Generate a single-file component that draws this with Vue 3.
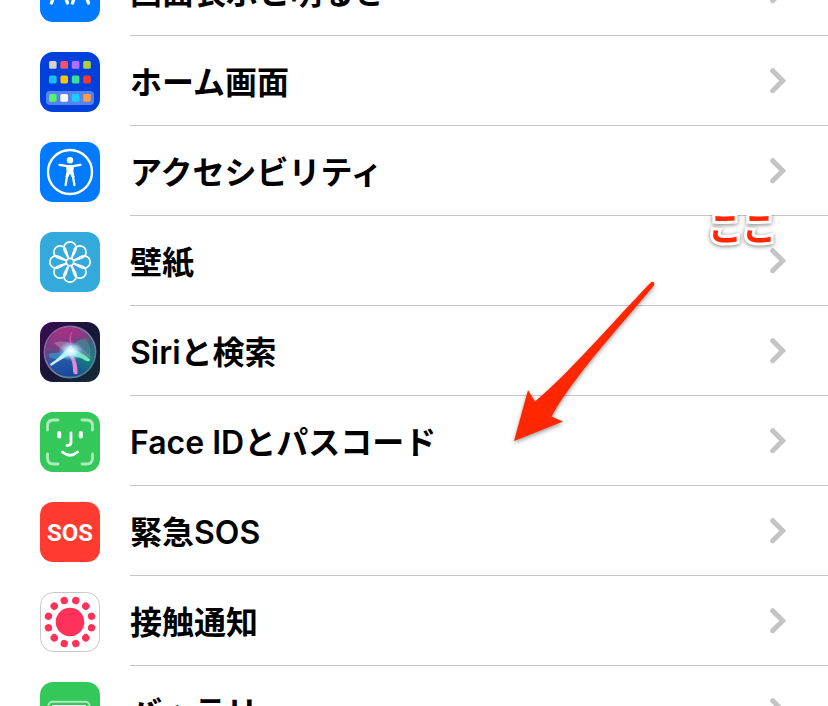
<template>
  <main class="screen">
    <ul class="settings-list">
      <li v-for="item in items" :key="item.id">
        <a class="row" :href="`#${item.id}`">
          <svg class="icon" viewBox="0 0 60 60" aria-hidden="true">
            <defs v-if="item.id === 'siri'">
              <linearGradient id="siri-bg" x1="0" y1="0" x2="1" y2="1">
                <stop offset="0" stop-color="#3c0b55" />
                <stop offset="0.5" stop-color="#171536" />
                <stop offset="1" stop-color="#152c38" />
              </linearGradient>
              <linearGradient id="siri-orb" x1="0.3" y1="0" x2="0.5" y2="1">
                <stop offset="0" stop-color="#b52a86" />
                <stop offset="0.4" stop-color="#704383" />
                <stop offset="0.65" stop-color="#2757a6" />
                <stop offset="1" stop-color="#1549a0" />
              </linearGradient>
              <radialGradient id="siri-teal" cx="0.95" cy="0.6" r="0.5">
                <stop offset="0" stop-color="#15866f" />
                <stop offset="1" stop-color="#15866f" stop-opacity="0" />
              </radialGradient>
              <radialGradient id="siri-glow">
                <stop offset="0" stop-color="#ffffff" />
                <stop offset="0.4" stop-color="#c8f5ff" stop-opacity="0.85" />
                <stop offset="1" stop-color="#67cfff" stop-opacity="0" />
              </radialGradient>
              <linearGradient id="siri-ring" x1="0" y1="0" x2="1" y2="1">
                <stop offset="0" stop-color="#9b4a9b" />
                <stop offset="0.5" stop-color="#7b81a6" />
                <stop offset="1" stop-color="#37869a" />
              </linearGradient>
            </defs>

            <rect
              class="tile"
              :class="{ outlined: item.id === 'exposure' }"
              :x="item.id === 'exposure' ? 0.5 : 0"
              :y="item.id === 'exposure' ? 0.5 : 0"
              :width="item.id === 'exposure' ? 59 : 60"
              :height="item.id === 'exposure' ? 59 : 60"
              rx="13"
              :fill="item.color"
            />

            <g v-if="item.id === 'display'" fill="none" stroke="#fff" stroke-width="3.4" stroke-linecap="round" stroke-linejoin="round">
              <path d="M11.5 41 L19.5 18 L27.5 41 M14 35 H25" />
              <path d="M32.5 41 L40.5 18 L48.5 41 M35 35 H46" />
            </g>

            <g v-else-if="item.id === 'home'">
              <rect x="6" y="39" width="48" height="14" rx="4" fill="#5684ea" />
              <rect
                v-for="(color, i) in homeColors"
                :key="i"
                :x="9 + (i % 4) * 11.4"
                :y="homeRows[Math.floor(i / 4)]"
                width="7.6"
                height="7.8"
                rx="1.6"
                :fill="color"
              />
            </g>

            <g v-else-if="item.id === 'accessibility'">
              <circle cx="30" cy="30" r="22" fill="none" stroke="#fff" stroke-width="2.4" />
              <circle cx="30" cy="18.2" r="3.2" fill="#fff" />
              <path d="M19.5 22.8 L27 24.2 H33 L40.5 22.8 M27.5 31.5 L25.6 43 M32.5 31.5 L34.4 43" fill="none" stroke="#fff" stroke-width="2.3" stroke-linecap="round" />
              <path d="M26 23.5 H34 L33.4 30 L34.6 35 H31.6 L30 31.5 L28.4 35 H25.4 L26.6 30 Z" fill="#fff" />
            </g>

            <g v-else-if="item.id === 'wallpaper'" fill="none" stroke="#fff" stroke-width="1.7" stroke-linejoin="round">
              <path
                v-for="n in 8"
                :key="n"
                d="M28.6 26.6 L24.8 19.5 C23.9 18 23.8 17 23.8 16 A6.2 6.2 0 0 1 36.2 16 C36.2 17 36.1 18 35.2 19.5 L31.4 26.6"
                :transform="`rotate(${n * 45} 30 30)`"
              />
              <circle cx="30" cy="30" r="3.7" />
            </g>

            <g v-else-if="item.id === 'siri'">
              <circle cx="30" cy="30" r="24.5" fill="url(#siri-orb)" />
              <circle cx="30" cy="30" r="24.5" fill="url(#siri-teal)" />
              <path d="M14 21 C23 17 40 21 52 36 C42 35 34 34 29 31 C24 29 18 25 14 21 Z" fill="#c987bc" opacity="0.5" />
              <path d="M33 29 C33 22 38 16 46 17 C51 25 52 32 49 37 C44 33 38 30 33 29 Z" fill="#508ba0" opacity="0.55" />
              <path d="M31 28 C29 20 28 13 33 8 C29 17 32 23 34 29 Z" fill="#e24da2" opacity="0.8" />
              <path d="M9 32 C18 30 24 30 30 32 L28 36 C21 38 14 38 9 35 Z" fill="#39a7d7" opacity="0.6" />
              <path d="M30 27 C35 35 38 43 37.5 52 C34 53 33 51 33 48 C33 41 31 35 27 31 Z" fill="#e489cf" />
              <path d="M30 27 C36 28 45 32 50.5 38 C48 40.5 46 39 43 37 C38 35 34 34 29 34 Z" fill="#76e6bc" />
              <path d="M10 42 C18 37 24 30 31 23 L34 31 C26 34 19 39 11 44 Z" fill="#c6f3ff" />
              <ellipse cx="31" cy="29" rx="13" ry="10" fill="url(#siri-glow)" />
              <circle cx="30" cy="30" r="25.5" fill="none" stroke="url(#siri-ring)" stroke-width="1.8" />
            </g>

            <g v-else-if="item.id === 'faceid'" fill="none" stroke="#fff" stroke-linecap="round">
              <g stroke="#b1e9bf" stroke-width="2.8">
                <path d="M7.5 18 V14 Q7.5 8 13.5 8 H18" />
                <path d="M42 8 H46.5 Q52.5 8 52.5 14 V18" />
                <path d="M7.5 42 V46 Q7.5 52 13.5 52 H18" />
                <path d="M42 52 H46.5 Q52.5 52 52.5 46 V42" />
              </g>
              <path d="M19.2 21 V24.5 M40.8 21 V24.5" stroke-width="4" />
              <path d="M31 21 V30.5 Q31 33.5 27 33.5" stroke-width="2.8" />
              <path d="M22.5 40 Q30 46.5 37.5 40" stroke-width="2.9" />
            </g>

            <text v-else-if="item.id === 'sos'" class="sos" x="30" y="39" text-anchor="middle">SOS</text>

            <g v-else-if="item.id === 'exposure'" fill="#fd3159">
              <circle cx="30" cy="30" r="14.3" />
              <circle
                v-for="n in 12"
                :key="n"
                cx="30"
                cy="7.7"
                r="3.7"
                :transform="`rotate(${n * 30 + 15} 30 30)`"
              />
            </g>

            <g v-else-if="item.id === 'battery'">
              <rect x="8.5" y="19.8" width="41" height="21" rx="4" fill="none" stroke="#b1e9bf" stroke-width="2" />
              <rect x="11.5" y="23" width="35" height="15" rx="2" fill="#fff" />
              <path d="M52 27 Q54.5 30 52 34 Z" fill="#b1e9bf" />
            </g>
          </svg>

          <span class="row-body">
            <span class="label">{{ item.label }}</span>
            <svg class="chevron" viewBox="0 0 16 28" aria-hidden="true">
              <path d="M2.7 2.7 L12.7 12.7 L2.7 22.7" />
            </svg>
          </span>
        </a>
      </li>
    </ul>

    <div class="note"><span>ここ</span></div>
    <svg class="arrow" viewBox="0 0 144 164" aria-hidden="true">
      <path d="M2 161 L16 110 L23 121.5 C54 96 99 44 138.5 2.8 Q140.5 1 142 2.5 Q143 4 141.5 6 C105 50 62 96 39.5 136.5 L51 141.5 Z" />
    </svg>
  </main>
</template>

<script setup>
const items = [
  { id: 'display', label: '画面表示と明るさ', color: '#007aff' },
  { id: 'home', label: 'ホーム画面', color: '#0040dd' },
  { id: 'accessibility', label: 'アクセシビリティ', color: '#007aff' },
  { id: 'wallpaper', label: '壁紙', color: '#34aadc' },
  { id: 'siri', label: 'Siriと検索', color: 'url(#siri-bg)' },
  { id: 'faceid', label: 'Face IDとパスコード', color: '#34c759' },
  { id: 'sos', label: '緊急SOS', color: '#ff3b30' },
  { id: 'exposure', label: '接触通知', color: '#ffffff' },
  { id: 'battery', label: 'バッテリー', color: '#34c759' }
]

const homeRows = [9, 23.6, 42]

const homeColors = [
  '#d5d3cf', '#ff5066', '#b66dff', '#b0d136',
  '#18bfff', '#ffc400', '#3ddc97', '#ff382b',
  '#58f26b', '#ffffff', '#18cfff', '#ff9d45'
]
</script>

<style>
body {
  margin: 0;
  background: #ffffff;
}
</style>

<style scoped>
.screen {
  position: relative;
  height: 100vh;
  overflow: hidden;
  background: #ffffff;
  font-family: Inter, "Noto Sans CJK JP", sans-serif;
}

/* The list is scrolled partway through its first row. */
.settings-list {
  list-style: none;
  margin: -54px 0 0;
  padding: 0;
}

.row {
  display: flex;
  align-items: center;
  padding-left: 40px;
  color: #000000;
  text-decoration: none;
}

.icon {
  flex: none;
  width: 60px;
  height: 60px;
  margin: 2px 30px 0 0;
}

.tile.outlined {
  stroke: #c8c8ca;
  stroke-width: 1;
}

.sos {
  fill: #ffffff;
  font-family: Roboto, sans-serif;
  font-size: 24px;
  font-weight: 700;
}

.row-body {
  display: flex;
  flex: 1;
  align-items: center;
  justify-content: space-between;
  box-sizing: border-box;
  height: 90px;
  padding: 2px 42px 0 0;
  border-bottom: 1px solid #c6c6c8;
}

.label {
  padding-top: 2px;
  font-size: 32px;
  font-weight: 600;
  line-height: 48px;
  white-space: nowrap;
}

.chevron {
  flex: none;
  width: 16px;
  height: 28px;
}

.chevron path {
  fill: none;
  stroke: #c4c4c6;
  stroke-width: 5;
  stroke-linecap: round;
  stroke-linejoin: miter;
}

/* Callout drawn over the list; its upper half is cut by the box. */
.note {
  position: absolute;
  top: 215px;
  right: 48px;
  display: flex;
  align-items: flex-end;
  height: 36px;
  overflow: hidden;
  padding: 0 4px;
  color: #ff2600;
  font-family: "Noto Sans CJK JP", sans-serif;
  font-size: 34px;
  font-weight: 700;
  line-height: 48px;
}

.note span {
  paint-order: stroke fill;
  -webkit-text-stroke: 6px #ffffff;
  filter: drop-shadow(0 1px 2px rgba(0, 0, 0, 0.5));
}

.arrow {
  position: absolute;
  top: 280px;
  right: 172px;
  width: 144px;
  height: 164px;
  filter: drop-shadow(0 2px 2px rgba(0, 0, 0, 0.4));
}

.arrow path {
  fill: #ff2600;
}
</style>
